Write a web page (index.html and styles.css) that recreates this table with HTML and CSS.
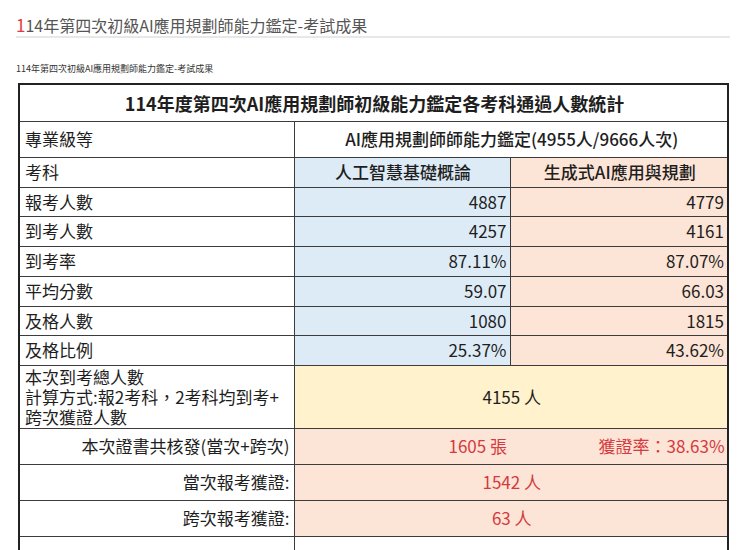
FILE: index.html
```html
<!DOCTYPE html>
<html lang="zh-Hant">
<head>
<meta charset="utf-8">
<title>114年第四次初級AI應用規劃師能力鑑定-考試成果</title>
<link rel="stylesheet" href="styles.css">
</head>
<body>
<div class="page">
  <h1 class="page-title"><span class="first">1</span>14年第四次初級AI應用規劃師能力鑑定-考試成果</h1>
  <p class="sub">114年第四次初級AI應用規劃師能力鑑定-考試成果</p>
  <table class="stats">
    <colgroup>
      <col class="c1"><col class="c2"><col class="c3">
    </colgroup>
    <tr class="r-title"><td colspan="3" class="title">114年度第四次AI應用規劃師初級能力鑑定各考科通過人數統計</td></tr>
    <tr class="r-36"><td class="label">專業級等</td><td colspan="2" class="center med">AI應用規劃師師能力鑑定(4955人/9666人次)</td></tr>
    <tr class="r-30"><td class="label">考科</td><td class="blue center med">人工智慧基礎概論</td><td class="orange center med">生成式AI應用與規劃</td></tr>
    <tr class="r-29"><td class="label">報考人數</td><td class="blue num">4887</td><td class="orange num">4779</td></tr>
    <tr class="r-30"><td class="label">到考人數</td><td class="blue num">4257</td><td class="orange num">4161</td></tr>
    <tr class="r-30"><td class="label">到考率</td><td class="blue num">87.11%</td><td class="orange num">87.07%</td></tr>
    <tr class="r-30"><td class="label">平均分數</td><td class="blue num">59.07</td><td class="orange num">66.03</td></tr>
    <tr class="r-29"><td class="label">及格人數</td><td class="blue num">1080</td><td class="orange num">1815</td></tr>
    <tr class="r-30"><td class="label">及格比例</td><td class="blue num">25.37%</td><td class="orange num">43.62%</td></tr>
    <tr class="r-63"><td class="label multi"><div>本次到考總人數</div><div>計算方式:報2考科，2考科均到考+</div><div>跨次獲證人數</div></td><td colspan="2" class="yellow center">4155 人</td></tr>
    <tr class="r-36"><td class="label right">本次證書共核發(當次+跨次)</td><td colspan="2" class="orange red split"><span class="split-a">1605 張</span><span>獲證率：38.63%</span></td></tr>
    <tr class="r-36"><td class="label right">當次報考獲證:</td><td colspan="2" class="orange red center">1542 人</td></tr>
    <tr class="r-36"><td class="label right">跨次報考獲證:</td><td colspan="2" class="orange red center">63 人</td></tr>
    <tr class="r-blank"><td></td><td colspan="2"></td></tr>
  </table>
</div>
</body>
</html>
```
FILE: styles.css
```css
html, body {
  margin: 0;
  padding: 0;
  background: #fff;
  overflow: hidden;
}
body {
  font-family: "Noto Sans CJK TC", "Noto Sans", sans-serif;
  color: #1e1e1e;
}
.page {
  padding: 0 10px 0 16px;
}
.page-title {
  margin: 0;
  padding-top: 14px;
  font-size: 16px;
  line-height: 22px;
  font-weight: 400;
  color: #555;
  border-bottom: 2px solid #e8e8e8;
}
.page-title .first {
  color: #e23a45;
  font-size: 17px;
}
.sub {
  margin: 24px 0 0;
  font-size: 9px;
  line-height: 13px;
  color: #333;
}
.stats {
  margin: 8px 0 0 2px;
  border-collapse: collapse;
  table-layout: fixed;
  width: 709px;
  font-size: 17px;
  border-left: 2px solid #222;
  border-right: 2px solid #222;
}
.c1 { width: 275px; }
.c2 { width: 216px; }
.c3 { width: 218px; }
.stats td {
  border: 1px solid #3c3c3c;
  padding: 0 3px 0 5px;
  white-space: nowrap;
  overflow: hidden;
  line-height: 22px;
}
.stats tr > td:first-child { border-left: 2px solid #222; }
.stats tr > td:last-child { border-right: 2px solid #222; }
.r-title td { border-top: 2px solid #222; }
.r-title { height: 37px; }
.r-36 { height: 36px; }
.r-30 { height: 30px; }
.r-29 { height: 29px; }
.r-63 { height: 63px; }
.r-blank { height: 22px; }
.r-blank td { border-bottom: none; }
.title {
  text-align: center;
  font-size: 18px;
  font-weight: 700;
}
.center { text-align: center; }
.med { font-weight: 500; }
.num { text-align: right; }
.right { text-align: right; padding-right: 4px !important; }
.blue { background: #ddebf7; }
.orange { background: #fce4d6; }
.yellow { background: #fff2cc; }
.red { color: #d43a3e; }
.split > span { display: inline-block; }
.split {
  padding-left: 154px !important;
}
.split-a { width: 150px; }
.stats td.multi {
  line-height: 21px;
  padding-top: 0;
  padding-bottom: 0;
}
.multi > div {
  height: 20px;
  line-height: 20px;
}
```
